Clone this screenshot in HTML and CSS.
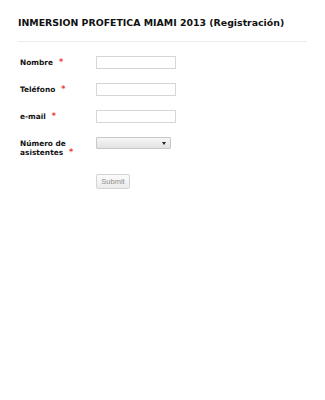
FILE: index.html
```html
<!DOCTYPE html>
<html lang="es">
<head>
<meta charset="utf-8">
<link rel="stylesheet" href="styles.css">
</head>
<body>
<div class="form">
  <h1 class="title">INMERSION PROFETICA MIAMI 2013 (Registración)</h1>
  <div class="divider"></div>
  <div class="row">
    <label class="label">Nombre<span class="req">*</span></label>
    <div class="input"></div>
  </div>
  <div class="row">
    <label class="label">Teléfono<span class="req">*</span></label>
    <div class="input"></div>
  </div>
  <div class="row">
    <label class="label">e-mail<span class="req">*</span></label>
    <div class="input"></div>
  </div>
  <div class="row row-top">
    <label class="label">Número de<br>asistentes<span class="req">*</span></label>
    <div class="select"><span class="arrow"></span></div>
  </div>
  <div class="row row-submit">
    <div class="label"></div>
    <div class="button">Submit</div>
  </div>
</div>
</body>
</html>
```
FILE: styles.css
```css
html, body { margin: 0; padding: 0; background: #fff; }
.form {
  padding: 17px 18px 0 18px;
  font-family: "DejaVu Sans", Verdana, sans-serif;
  color: #111;
}
.title {
  margin: 0;
  font-size: 9.4px;
  font-weight: bold;
  line-height: 12px;
  color: #111;
}
.divider {
  margin-top: 12px;
  height: 1px;
  background: #ececec;
  width: 289px;
}
.row {
  display: flex;
  align-items: center;
  margin-top: 14px;
  height: 13px;
}
.row + .row { margin-top: 14px; }
.row-top { align-items: flex-start; height: 26px; }
.row-submit { margin-top: 11px !important; height: 15px; }
.label {
  width: 78px;
  flex: none;
  padding-left: 2px;
  box-sizing: border-box;
  font-size: 7.4px;
  font-weight: bold;
  line-height: 9px;
  color: #111;
}
.row-top .label { margin-top: 2px; }
.req {
  color: #f23b3b;
  margin-left: 6px;
  font-size: 8px;
}
.input {
  width: 80px;
  height: 13px;
  box-sizing: border-box;
  border: 1px solid #d6d6d6;
  background: #fff;
}
.select {
  position: relative;
  width: 75px;
  height: 12px;
  box-sizing: border-box;
  border: 1px solid #c8c8c8;
  border-radius: 1px;
  background: linear-gradient(#f6f6f6, #e2e2e2);
}
.arrow {
  position: absolute;
  right: 4px;
  top: 4px;
  width: 0;
  height: 0;
  border-left: 2px solid transparent;
  border-right: 2px solid transparent;
  border-top: 3px solid #222;
}
.button {
  width: 34px;
  height: 15px;
  box-sizing: border-box;
  border: 1px solid #d4d4d4;
  border-radius: 2px;
  background: linear-gradient(#fbfbfb, #ececec);
  color: #8e8e8e;
  font-family: "Liberation Sans", Arial, sans-serif;
  font-size: 7.5px;
  line-height: 13px;
  text-align: center;
}
```
